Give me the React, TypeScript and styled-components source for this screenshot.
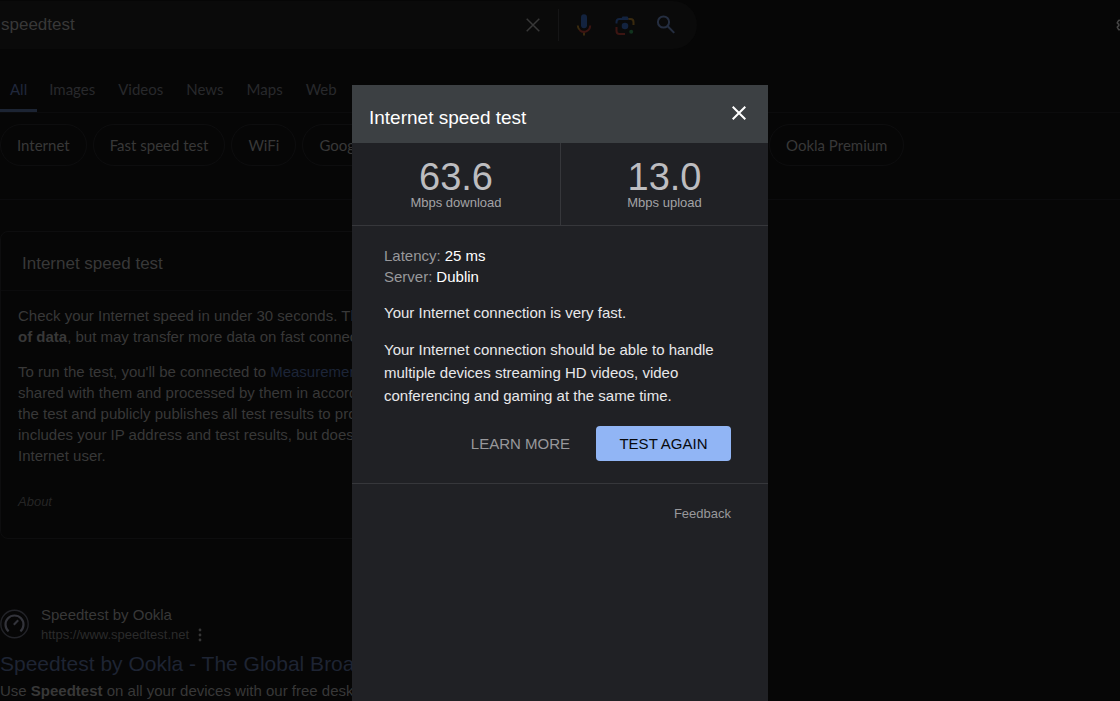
import React from 'react';
import styled, { createGlobalStyle } from 'styled-components';

const Global = createGlobalStyle`
  *, *::before, *::after { box-sizing: border-box; }
  html, body, #root { height: 100%; }
  body {
    margin: 0;
    background: #060606;
    color: #383838;
    font-family: 'Liberation Sans', Arial, sans-serif;
    font-size: 15px;
    overflow: hidden;
  }
  button, input { font: inherit; color: inherit; background: none; border: 0; padding: 0; margin: 0; }
  a { color: inherit; text-decoration: none; }
  h1, h2, h3, p, dl, dd { margin: 0; font-weight: 400; }
  svg { display: block; }
`;

const Page = styled.div`
  min-height: 100%;
  overflow: hidden;
`;

const Header = styled.header`
  display: flex;
  align-items: center;
  justify-content: space-between;
  padding-top: 1px;
`;

const SearchBar = styled.form`
  display: flex;
  align-items: center;
  flex: 0 1 697px;
  height: 48px;
  padding-right: 19px;
  background: #0a0a0a;
  border-radius: 0 24px 24px 0;
`;

const SearchInput = styled.input`
  flex: 1;
  min-width: 0;
  padding-left: 1px;
  font-size: 17px;
  outline: 0;
`;

const IconButton = styled.button`
  display: grid;
  place-items: center;
  width: 24px;
  height: 24px;
`;

const Separator = styled.span`
  width: 1px;
  height: 32px;
  margin: 0 13px;
  background: #151516;
`;

const SearchTools = styled.div`
  display: flex;
  gap: 17px;
`;

const SettingsButton = styled(IconButton)`
  flex: none;
  margin-right: -16px;
  color: #444444;
`;

const Tabs = styled.nav`
  display: flex;
  gap: 1px;
  height: 64px;
  border-bottom: 1px solid #0b0b0c;
  font-family: Lato, 'Liberation Sans', sans-serif;
`;

const Tab = styled.a<{ $active?: boolean }>`
  display: flex;
  align-items: center;
  padding: 20px ${(p) => (p.$active ? 10 : 11)}px 0;
  border-bottom: 3px solid ${(p) => (p.$active ? '#1c2433' : 'transparent')};
  color: ${(p) => (p.$active ? '#20283c' : '#28292c')};
`;

const ChipRow = styled.div`
  display: flex;
  gap: 7px;
  height: 87px;
  padding-top: 11px;
  border-bottom: 1px solid #0b0b0d;
  font-family: Lato, 'Liberation Sans', sans-serif;
`;

const ChipGroup = styled.div`
  display: flex;
  flex: 0 0 762px;
  gap: 6px;
`;

const Chip = styled.a`
  display: flex;
  align-items: center;
  height: 42px;
  padding: 0 16px;
  border: 1px solid #0d0d0e;
  border-radius: 21px;
  white-space: nowrap;
`;

const Card = styled.section`
  max-width: 697px;
  height: 308px;
  margin-top: 31px;
  border: 1px solid #0d0d0e;
  border-radius: 8px;
  white-space: nowrap;
  overflow: hidden;
`;

const CardTitle = styled.h2`
  height: 59px;
  padding: 0 21px;
  border-bottom: 1px solid #0b0b0c;
  font-size: 17px;
  line-height: 64px;
`;

const CardBody = styled.div`
  display: flex;
  flex-direction: column;
  gap: 14px;
  padding: 14px 17px;
  line-height: 21px;
`;

const InlineLink = styled.a`
  color: #1d2538;
`;

const About = styled.a`
  margin-top: 11px;
  color: #252525;
  font-size: 13px;
  font-style: italic;
`;

const Result = styled.article`
  max-width: 697px;
  margin-top: 65px;
  white-space: nowrap;
  overflow: hidden;
`;

const Source = styled.div`
  display: flex;
  align-items: center;
  gap: 12px;
`;

const SourceName = styled.div`
  line-height: 22px;
`;

const SourceUrl = styled.div`
  display: flex;
  align-items: center;
  gap: 8px;
  color: #2b2b2b;
  font-size: 13px;
  line-height: 18px;
`;

const ResultTitle = styled.h3`
  margin-top: 4px;
  color: #1e2433;
  font-size: 21px;
  line-height: 32px;
`;

const Snippet = styled.p`
  line-height: 22px;
`;

const Dialog = styled.div`
  position: fixed;
  top: 85px;
  bottom: 0;
  left: calc(50% - 208px);
  width: 416px;
  background: #202125;
  color: #e8e8ea;
  overflow: hidden;
`;

const DialogHeader = styled.header`
  display: flex;
  justify-content: space-between;
  height: 58px;
  padding: 0 17px;
  background: #3c4043;
`;

const DialogTitle = styled.h1`
  color: #ffffff;
  font-size: 19px;
  line-height: 65px;
`;

const CloseButton = styled(IconButton)`
  margin-top: 16px;
  color: #ffffff;
`;

const Stats = styled.div`
  display: grid;
  grid-template-columns: 1fr 1fr;
  height: 83px;
  border-bottom: 1px solid #36373b;
`;

const Stat = styled.div`
  display: flex;
  flex-direction: column;
  align-items: center;
  padding-top: 17px;
  color: #a3a3a6;

  & + & { border-left: 1px solid #36373b; }
`;

const StatValue = styled.strong`
  color: #bdbdc0;
  font-size: 38px;
  font-weight: 400;
  line-height: 35px;
`;

const StatUnit = styled.span`
  font-size: 13px;
  line-height: 15px;
`;

const DialogBody = styled.div`
  display: flex;
  flex-direction: column;
  gap: 14px;
  height: 258px;
  padding: 19px 37px 0 32px;
  border-bottom: 1px solid #36373b;
  line-height: 23px;
`;

const Facts = styled.dl`
  line-height: 21px;
`;

const Fact = styled.div`
  display: flex;
  gap: 4px;
`;

const FactLabel = styled.dt`
  color: #98989b;
`;

const FactValue = styled.dd`
  color: #ffffff;
`;

const Actions = styled.div`
  display: flex;
  justify-content: flex-end;
  gap: 26px;
  margin-top: 5px;
`;

const TextButton = styled.button`
  height: 35px;
  color: #98989b;
`;

const PrimaryButton = styled.button`
  width: 135px;
  height: 35px;
  border-radius: 4px;
  background: #91b5f5;
  color: #08090c;
`;

const DialogFooter = styled.footer`
  display: flex;
  justify-content: flex-end;
  padding: 21px 37px;
  color: #98989b;
  font-size: 13px;
  line-height: 17px;
`;

const tabs = ['All', 'Images', 'Videos', 'News', 'Maps', 'Web'];

const Cross = ({ size, width }: { size: number; width: number }) => (
  <svg width={size} height={size} viewBox="0 0 14 14" stroke="currentColor" strokeWidth={width}>
    <path d="M0.7 0.7 13.3 13.3M13.3 0.7 0.7 13.3" />
  </svg>
);

const MicIcon = () => (
  <svg width="24" height="24" viewBox="0 0 24 24" fill="none">
    <rect x="9" y="1.3" width="6" height="14" rx="3" fill="#13233f" />
    <path d="M12 18.5V22.5" stroke="#3a2a0e" strokeWidth="2" />
    <path d="M5.8 12.5a6.2 6.2 0 0 0 2 4.5" stroke="#3a2a0e" strokeWidth="2" />
    <path d="M7.5 17a6.3 6.3 0 0 0 10.7-4.5" stroke="#3c1512" strokeWidth="2" />
  </svg>
);

const LensIcon = () => (
  <svg width="24" height="24" viewBox="0 0 24 24" fill="none" strokeWidth="2">
    <path d="M3.5 10.5V9a3 3 0 0 1 3-3h9" stroke="#13233f" />
    <path d="M8 6l1.5-2.4h5L16 6z" fill="#13233f" />
    <path d="M15.5 6h2a3 3 0 0 1 3 3v3" stroke="#3a2a0e" />
    <path d="M3.5 14v4a3 3 0 0 0 3 3h5.5" stroke="#3c1512" />
    <circle cx="12" cy="13" r="3.3" fill="#13233f" />
    <circle cx="18.2" cy="18.7" r="2" fill="#12331e" />
  </svg>
);

const SearchIcon = () => (
  <svg width="24" height="24" viewBox="0 0 24 24" fill="none" stroke="#252e40" strokeWidth="2">
    <circle cx="9.5" cy="9" r="5.6" />
    <path d="M13.7 13.2 20.2 19.9" />
  </svg>
);

const GearIcon = () => (
  <svg width="18" height="18" viewBox="0 0 24 24" fill="currentColor">
    <path d="M13.85 22.25h-3.7c-.74 0-1.36-.54-1.45-1.27l-.27-1.89c-.27-.14-.53-.29-.79-.46l-1.8.72c-.7.26-1.47-.03-1.81-.65L2.2 15.53c-.35-.66-.2-1.44.36-1.88l1.53-1.19c-.01-.15-.02-.3-.02-.46 0-.15.01-.31.02-.46l-1.52-1.19c-.59-.45-.74-1.26-.37-1.88l1.85-3.19c.34-.62 1.11-.9 1.79-.63l1.81.73c.26-.17.52-.32.78-.46l.27-1.91c.09-.7.71-1.25 1.44-1.25h3.7c.74 0 1.36.54 1.45 1.27l.27 1.89c.27.14.53.29.79.46l1.8-.72c.71-.26 1.48.03 1.82.65l1.84 3.18c.36.66.2 1.44-.36 1.88l-1.52 1.19c.01.15.02.3.02.46s-.01.31-.02.46l1.52 1.19c.56.45.72 1.23.37 1.86l-1.86 3.22c-.34.62-1.11.9-1.8.63l-1.8-.72c-.26.17-.52.32-.78.46l-.27 1.91c-.1.68-.72 1.22-1.46 1.22zm-3.23-2h2.76l.37-2.55.53-.22c.44-.18.88-.44 1.34-.78l.45-.34 2.38.96 1.38-2.4-2.03-1.58.07-.56c.03-.26.06-.51.06-.78s-.03-.53-.06-.78l-.07-.56 2.03-1.58-1.39-2.4-2.39.96-.45-.35c-.42-.32-.87-.58-1.33-.77l-.52-.22-.37-2.55h-2.76l-.37 2.55-.53.21c-.44.19-.88.44-1.34.79l-.45.33-2.38-.95-1.39 2.39 2.03 1.58-.07.56a7 7 0 0 0-.06.79c0 .26.02.53.06.78l.07.56-2.03 1.58 1.38 2.4 2.39-.96.45.35c.43.33.86.58 1.33.77l.53.22z" />
  </svg>
);

const SpeedIcon = () => (
  <svg width="29" height="30" viewBox="0 0 29 30" fill="none">
    <circle cx="14.5" cy="15" r="13.7" stroke="#222328" strokeWidth="1.4" />
    <path d="M8.6 22.3a9 9 0 1 1 11.8 0" stroke="#33343b" strokeWidth="2.2" />
    <path d="M13.8 15.8 18.2 11.2" stroke="#33343b" strokeWidth="2" />
  </svg>
);

const DotsIcon = () => (
  <svg width="6" height="14" viewBox="0 0 6 14" fill="#363636">
    <circle cx="3" cy="2" r="1.4" />
    <circle cx="3" cy="7" r="1.4" />
    <circle cx="3" cy="12" r="1.4" />
  </svg>
);

export default function App() {
  return (
    <>
      <Global />
      <Page>
        <Header>
          <SearchBar role="search">
            <SearchInput aria-label="Search" defaultValue="speedtest" />
            <IconButton type="button" aria-label="Clear"><Cross size={14} width={1.5} /></IconButton>
            <Separator />
            <SearchTools>
              <IconButton type="button" aria-label="Search by voice"><MicIcon /></IconButton>
              <IconButton type="button" aria-label="Search by image"><LensIcon /></IconButton>
              <IconButton type="submit" aria-label="Search"><SearchIcon /></IconButton>
            </SearchTools>
          </SearchBar>
          <SettingsButton type="button" aria-label="Settings"><GearIcon /></SettingsButton>
        </Header>

        <Tabs>
          {tabs.map((name) => (
            <Tab key={name} href="#" $active={name === 'All'}>{name}</Tab>
          ))}
        </Tabs>

        <ChipRow>
          <ChipGroup>
            <Chip href="#">Internet</Chip>
            <Chip href="#">Fast speed test</Chip>
            <Chip href="#">WiFi</Chip>
            <Chip href="#">Google</Chip>
          </ChipGroup>
          <Chip href="#">Ookla Premium</Chip>
        </ChipRow>

        <Card>
          <CardTitle>Internet speed test</CardTitle>
          <CardBody>
            <p>
              Check your Internet speed in under 30 seconds. The<br />
              <b>of data</b>, but may transfer more data on fast connections.
            </p>
            <p>
              To run the test, you'll be connected to <InlineLink href="#">Measurement</InlineLink><br />
              shared with them and processed by them in accordance<br />
              the test and publicly publishes all test results to promote<br />
              includes your IP address and test results, but doesn't<br />
              Internet user.
            </p>
            <About href="#">About</About>
          </CardBody>
        </Card>

        <Result>
          <Source>
            <SpeedIcon />
            <div>
              <SourceName>Speedtest by Ookla</SourceName>
              <SourceUrl>https://www.speedtest.net <DotsIcon /></SourceUrl>
            </div>
          </Source>
          <ResultTitle><a href="#">Speedtest by Ookla - The Global Broad</a></ResultTitle>
          <Snippet>Use <b>Speedtest</b> on all your devices with our free desktop</Snippet>
        </Result>
      </Page>

      <Dialog role="dialog" aria-labelledby="dialog-title">
        <DialogHeader>
          <DialogTitle id="dialog-title">Internet speed test</DialogTitle>
          <CloseButton type="button" aria-label="Close"><Cross size={14} width={2} /></CloseButton>
        </DialogHeader>
        <Stats>
          <Stat>
            <StatValue>63.6</StatValue>
            <StatUnit>Mbps download</StatUnit>
          </Stat>
          <Stat>
            <StatValue>13.0</StatValue>
            <StatUnit>Mbps upload</StatUnit>
          </Stat>
        </Stats>
        <DialogBody>
          <Facts>
            <Fact><FactLabel>Latency:</FactLabel><FactValue>25 ms</FactValue></Fact>
            <Fact><FactLabel>Server:</FactLabel><FactValue>Dublin</FactValue></Fact>
          </Facts>
          <p>Your Internet connection is very fast.</p>
          <p>
            Your Internet connection should be able to handle multiple devices streaming HD videos,
            video conferencing and gaming at the same time.
          </p>
          <Actions>
            <TextButton type="button">LEARN MORE</TextButton>
            <PrimaryButton type="button">TEST AGAIN</PrimaryButton>
          </Actions>
        </DialogBody>
        <DialogFooter>
          <a href="#">Feedback</a>
        </DialogFooter>
      </Dialog>
    </>
  );
}
